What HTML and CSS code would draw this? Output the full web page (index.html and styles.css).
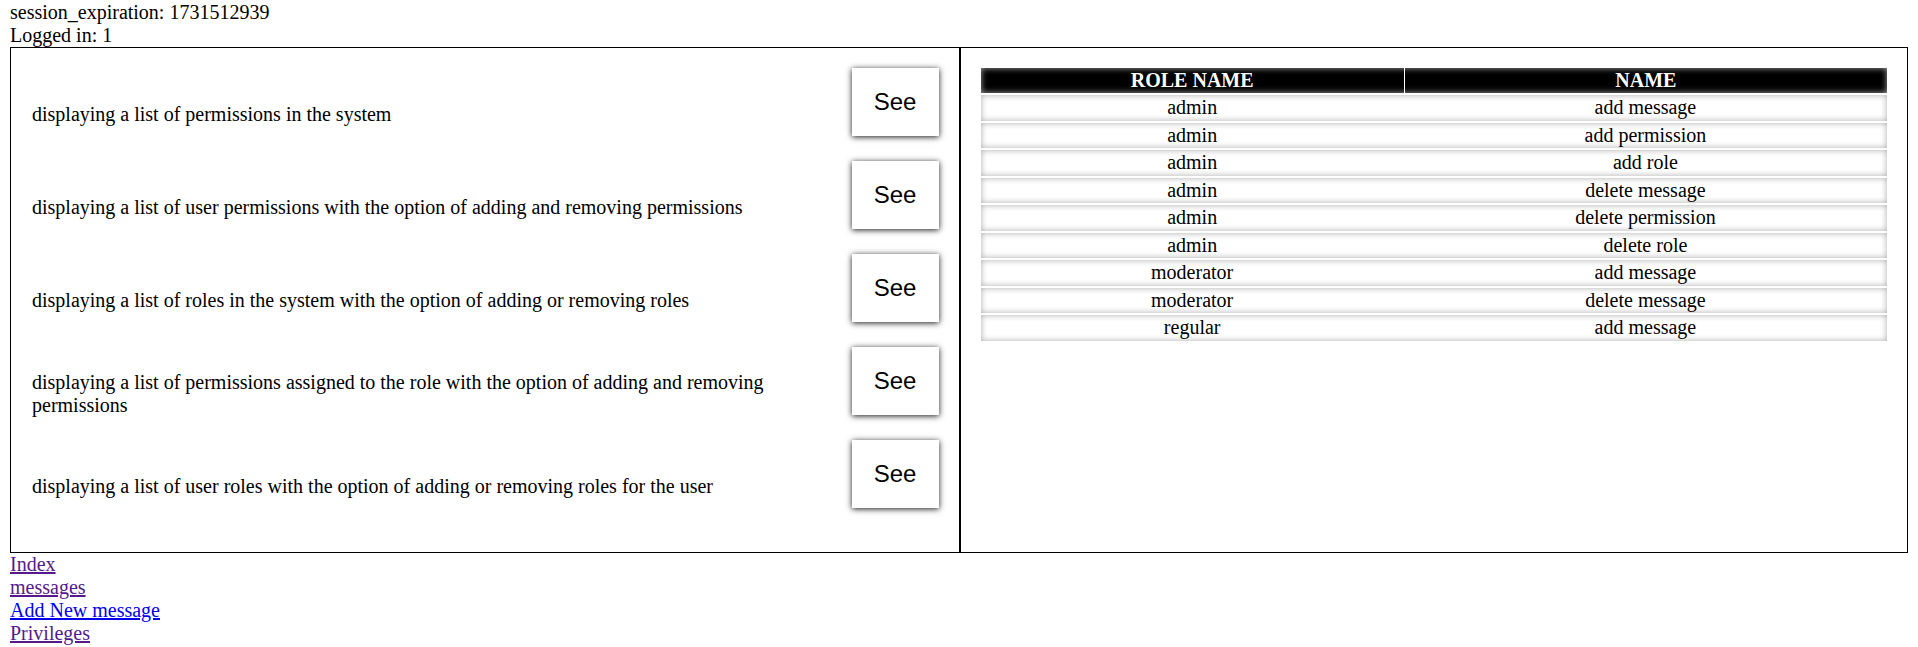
FILE: index.html
```html
<!DOCTYPE html>
<html lang="en">
<head>
    <meta charset="UTF-8">
    <meta name="viewport" content="width=device-width, initial-scale=1.0">
    <title>Privileges</title>
    <link rel="stylesheet" href="styles.css">
</head>
<body>
    <div>session_expiration: 1731512939</div>
    <div>Logged in: 1</div>

    <div class="panels">
        <div class="panel actions">
            <div class="item">
                <p>displaying a list of permissions in the system</p>
                <button>See</button>
            </div>
            <div class="item">
                <p>displaying a list of user permissions with the option of adding and removing permissions</p>
                <button>See</button>
            </div>
            <div class="item">
                <p>displaying a list of roles in the system with the option of adding or removing roles</p>
                <button>See</button>
            </div>
            <div class="item">
                <p>displaying a list of permissions assigned to the role with the option of adding and removing permissions</p>
                <button>See</button>
            </div>
            <div class="item">
                <p>displaying a list of user roles with the option of adding or removing roles for the user</p>
                <button>See</button>
            </div>
        </div>

        <div class="panel result">
            <table>
                <tr class="head">
                    <th class="col-role">ROLE NAME</th>
                    <th>NAME</th>
                </tr>
                <tr><td>admin</td><td>add message</td></tr>
                <tr><td>admin</td><td>add permission</td></tr>
                <tr><td>admin</td><td>add role</td></tr>
                <tr><td>admin</td><td>delete message</td></tr>
                <tr><td>admin</td><td>delete permission</td></tr>
                <tr><td>admin</td><td>delete role</td></tr>
                <tr><td>moderator</td><td>add message</td></tr>
                <tr><td>moderator</td><td>delete message</td></tr>
                <tr><td>regular</td><td>add message</td></tr>
            </table>
        </div>
    </div>

    <div class="links">
        <a class="visited" href="#">Index</a>
        <a class="visited" href="#">messages</a>
        <a href="#">Add New message</a>
        <a class="visited" href="#">Privileges</a>
    </div>
</body>
</html>
```

FILE: styles.css
```css
body {
    font-family: 'Liberation Serif', 'Times New Roman', serif;
    font-size: 20px;
    line-height: 23px;
    margin: 1px 10px 0;
    color: #000;
}
.panels {
    display: flex;
}
.panel {
    flex: 1;
    border: 1px solid #000;
}
.actions {
    padding: 20px 20px 19px 21px;
}
.item {
    display: flex;
    align-items: center;
    gap: 20px;
}
.item p {
    flex: 1;
    margin: 0;
}
.item button {
    width: 87px;
    height: 68px;
    margin-bottom: 25px;
    border: none;
    background: #fff;
    font-family: 'Liberation Sans', Arial, sans-serif;
    font-size: 24px;
    color: #000;
    box-shadow: 0 1px 6px rgba(0, 0, 0, 0.9);
    cursor: pointer;
}
.result {
    padding: 18px 20px;
}
table {
    width: 100%;
    border-collapse: separate;
    border-spacing: 0 2px;
}
tr {
    background: #fff;
    box-shadow: inset 0 0 6px #aaa; /* soft edge per row */
}
tr.head {
    background: #000;
}
th {
    color: #fff;
    font-weight: bold;
    padding: 1px;
}
th + th {
    border-left: 1px solid #fff;
}
.col-role {
    width: 46.7%;
}
td {
    text-align: center;
    padding: 1px;
    line-height: 23.5px;
}
.links a {
    display: block;
    width: fit-content;
    color: #0000ee;
}
.links a.visited {
    color: #551a8b;
}
```
